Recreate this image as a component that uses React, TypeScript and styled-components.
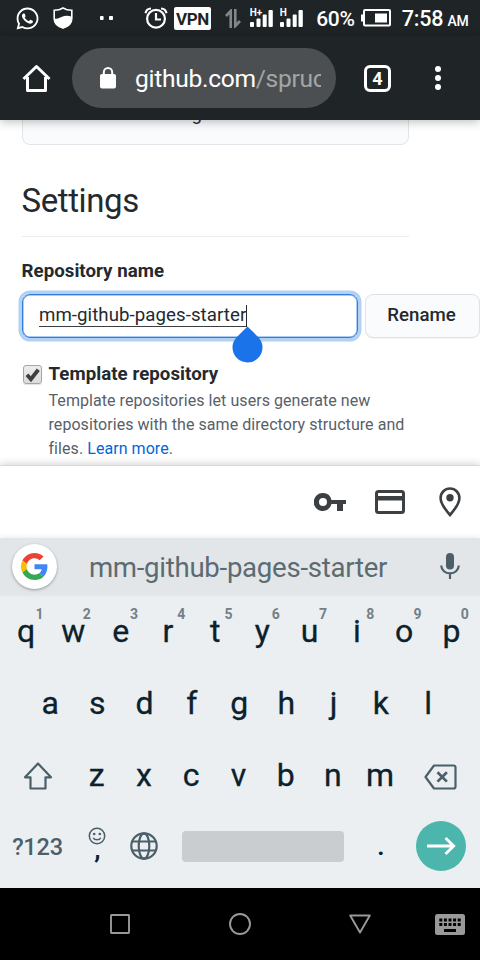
import React from "react";
import styled, { createGlobalStyle } from "styled-components";
import { FaWhatsapp } from "react-icons/fa";

const GlobalStyle = createGlobalStyle`
  * { box-sizing: border-box; }
  body { margin: 0; background: #fff; font-family: Roboto, "Liberation Sans", sans-serif; }
  svg { display: block; flex: none; }
`;

const Screen = styled.div`
  width: 480px;
  height: 960px;
  overflow: hidden;
  display: flex;
  flex-direction: column;
  background: #fff;
`;

/* ---------- status bar ---------- */

const StatusBar = styled.header`
  height: 36px;
  flex: none;
  display: flex;
  align-items: center;
  background: #1f2427;
  color: #fff;
`;

const StatusItem = styled.div<{ $gap: number; $width: number }>`
  flex: none;
  display: flex;
  justify-content: center;
  margin-left: ${(p) => p.$gap}px;
  width: ${(p) => p.$width}px;
`;

const VpnBadge = styled.div`
  width: 37px;
  height: 23px;
  margin-top: 1px;
  border-radius: 2px;
  background: #fff;
  color: #1f2427;
  font-size: 17px;
  font-weight: 700;
  letter-spacing: -0.4px;
  line-height: 25px;
  text-align: center;
`;

const StatusText = styled.span<{ $size: number; $top?: number }>`
  font-size: ${(p) => p.$size}px;
  font-weight: 500;
  line-height: 24px;
  letter-spacing: -0.2px;
  margin-top: ${(p) => p.$top ?? 2}px;
  white-space: nowrap;
`;

/* ---------- browser toolbar ---------- */

const Toolbar = styled.div`
  position: relative;
  z-index: 1;
  height: 84px;
  flex: none;
  display: flex;
  align-items: center;
  padding-left: 22px;
  background: #1f2427;
  box-shadow: 0 1px 10px rgba(0, 0, 0, 0.3);
`;

const AddressPill = styled.div`
  width: 264px;
  height: 60px;
  margin-left: 21px;
  padding: 0 15px 0 28px;
  border-radius: 30px;
  display: flex;
  align-items: center;
  gap: 19px;
  background: #4c4f52;
`;

const Url = styled.div`
  flex: 1;
  min-width: 0;
  overflow: hidden;
  white-space: nowrap;
  font-size: 24.6px;
  letter-spacing: -0.3px;
  line-height: 34px;
  padding-top: 1px;
  color: #fff;
`;

const UrlPath = styled.span`
  color: #a3a5a7;
`;

const TabCount = styled.div`
  width: 27px;
  height: 27px;
  margin-left: 28px;
  border: 3px solid #fff;
  border-radius: 6px;
  color: #fff;
  font-size: 18px;
  font-weight: 700;
  line-height: 22px;
  text-align: center;
`;

const Overflow = styled.div`
  width: 6px;
  margin-left: 44px;
  display: grid;
  gap: 3px;
`;

const OverflowDot = styled.i`
  width: 6px;
  height: 6px;
  border-radius: 50%;
  background: #fff;
`;

/* ---------- page ---------- */

const Page = styled.main`
  height: 345px;
  flex: none;
  overflow: hidden;
  padding-left: 21.5px;
  color: #24292e;
`;

const NoticeCard = styled.div`
  display: flex;
  align-items: flex-end;
  width: 387px;
  height: 64px;
  margin-top: -39.5px;
  padding: 0 0 18px 169px;
  border: 1px solid #e1e4e8;
  border-radius: 8px;
  background: #fafbfc;
  font-size: 18.67px;
  line-height: 24px;
`;

const Title = styled.h2`
  width: 387px;
  height: 92.5px;
  margin: 0;
  padding-top: 34.5px;
  border-bottom: 1px solid #eaecef;
  font-size: 33px;
  font-weight: 400;
  letter-spacing: -0.4px;
  line-height: 43px;
`;

const FieldLabel = styled.label`
  display: block;
  margin-top: 20px;
  font-size: 18.67px;
  font-weight: 700;
  letter-spacing: 0.05px;
  line-height: 28px;
`;

const RenameRow = styled.div`
  display: flex;
  gap: 7px;
  margin-top: 9px;
`;

const NameField = styled.div`
  position: relative;
  width: 336.5px;
  height: 44px;
  flex: none;
  display: flex;
  align-items: flex-start;
  padding: 6px 0 0 16.5px;
  border: 1px solid #2f7fe0;
  border-radius: 8px;
  box-shadow: 0 0 0 3.5px #b3d1f3, inset 0 0 0 0.5px #5b9ae6;
`;

const NameValue = styled.span`
  height: 26px;
  border-bottom: 1px solid #3a3f44;
  font-size: 18.67px;
  letter-spacing: 0.06px;
  line-height: 28px;
`;

const Caret = styled.i`
  width: 1px;
  height: 22px;
  margin-top: 4px;
  background: #24292e;
`;

const CaretHandle = styled.svg`
  position: absolute;
  left: 209px;
  top: 31px;
`;

const RenameButton = styled.button`
  width: 115px;
  height: 44px;
  flex: none;
  padding: 0 2px 3px 0;
  border: 1px solid #dfe1e4;
  border-radius: 8px;
  background: #fafbfc;
  box-shadow: 0 1px 0 rgba(27, 31, 35, 0.04);
  color: #24292e;
  font: 500 18.67px Roboto, sans-serif;
`;

const TemplateOption = styled.div`
  display: grid;
  grid-template-columns: 20px 370px;
  column-gap: 7px;
  margin-top: 22px;
  line-height: 28px;
`;

const Checkbox = styled.span`
  width: 19px;
  height: 19px;
  margin: 5px 0 0 1px;
  border: 1px solid #a6a6a6;
  border-radius: 3px;
  background: linear-gradient(#ededed, #dcdcdc);
  box-shadow: 0 1px 1px rgba(0, 0, 0, 0.12);
`;

const OptionTitle = styled.strong`
  font-size: 18.67px;
  font-weight: 700;
  letter-spacing: 0.06px;
`;

const OptionNote = styled.p`
  grid-column: 2;
  margin: 1px 0 0;
  color: #586069;
  font-size: 16px;
  letter-spacing: 0.06px;
  line-height: 24px;
`;

const NoteLink = styled.a`
  color: #0366d6;
`;

/* ---------- autofill and suggestion strips ---------- */

const AutofillBar = styled.div`
  position: relative;
  z-index: 1;
  height: 73px;
  flex: none;
  display: flex;
  align-items: center;
  padding-left: 314px;
  background: #fff;
  border-top: 1px solid #dadada;
  box-shadow: 0 -1px 8px rgba(0, 0, 0, 0.18);
`;

const AutofillIcon = styled.div<{ $gap?: number }>`
  margin-left: ${(p) => p.$gap ?? 0}px;
`;

const SuggestionBar = styled.div`
  position: relative;
  z-index: 2;
  height: 57px;
  flex: none;
  display: flex;
  align-items: center;
  padding-left: 12px;
  background: #e2e6e9;
  box-shadow: 0 -1px 5px rgba(0, 0, 0, 0.08);
`;

const GoogleButton = styled.div`
  width: 45px;
  height: 45px;
  flex: none;
  display: grid;
  place-items: center;
  border-radius: 50%;
  background: #fff;
  box-shadow: 0 1px 3px rgba(0, 0, 0, 0.35);
`;

const Suggestion = styled.div`
  width: 362px;
  text-align: center;
  padding-top: 2px;
  color: #5c6b72;
  font-size: 27.6px;
  letter-spacing: -0.28px;
  line-height: 32px;
`;

/* ---------- keyboard ---------- */

const Keyboard = styled.section`
  height: 293px;
  flex: none;
  background: #ebeff2;
  color: #0b222c;
`;

const KeyRow = styled.div<{ $inset: number }>`
  height: 72px;
  display: flex;
  padding-left: ${(p) => p.$inset}px;
`;

const Key = styled.div`
  position: relative;
  width: 47.25px;
  flex: none;
  text-align: center;
  font-size: 32px;
  line-height: 73px;
  -webkit-text-stroke: 0.3px currentColor;
`;

const KeyHint = styled.sup`
  position: absolute;
  left: 50%;
  top: 11px;
  width: 27px;
  color: #748086;
  font-size: 14px;
  font-weight: 700;
  line-height: 16px;
  -webkit-text-stroke: 0;
`;

const IconKey = styled.div<{ $width: number; $drop?: number }>`
  width: ${(p) => p.$width}px;
  flex: none;
  display: grid;
  place-items: center;
  padding-top: ${(p) => p.$drop ?? 0}px;
`;

const SymbolsKey = styled.div`
  width: 73px;
  padding-left: 2px;
  flex: none;
  text-align: center;
  color: #4b5f69;
  font-size: 23.5px;
  font-weight: 500;
  letter-spacing: -0.2px;
  line-height: 73px;
`;

const CommaKey = styled.div`
  width: 47px;
  display: flex;
  flex-direction: column;
  align-items: center;
  padding-top: 16px;
`;

const Comma = styled.span`
  margin-top: -6px;
  padding-left: 2px;
  font-size: 28px;
  font-weight: 500;
  line-height: 20px;
`;

const SpaceBar = styled.div`
  width: 162px;
  height: 31px;
  margin: 20px 0 0 14px;
  border-radius: 4px;
  background: #c9cdd0;
`;

const PeriodKey = styled.div`
  width: 72px;
  text-align: center;
  font-size: 28px;
  font-weight: 500;
  line-height: 70px;
  padding-left: 2px;
`;

const EnterKey = styled.div`
  width: 50px;
  height: 50px;
  margin-top: 10px;
  border-radius: 50%;
  display: grid;
  place-items: center;
  background: #4db6ac;
`;

/* ---------- navigation ---------- */

const NavBar = styled.nav`
  height: 72px;
  flex: none;
  display: grid;
  grid-template-columns: 60px repeat(3, 120px) 60px;
  align-items: center;
  justify-items: center;
  background: #000;
`;

const NavSlot = styled.div<{ $column: number }>`
  grid-column: ${(p) => p.$column};
`;

const Signal = ({ label }: { label: string }) => (
  <svg width="24" height="20" viewBox="0 0 24 20" fill="#fff">
    <rect x="0" y="14" width="4" height="5" rx="1" />
    <rect x="6.5" y="10.5" width="4" height="8.500" rx="1" />
    <rect x="12.700" y="6.500" width="4" height="12.500" rx="1" />
    <rect x="18.500" y="2" width="4.300" height="17" rx="1" />
    <text x="-0.300" y="7.600" fontFamily="Roboto" fontSize="10" fontWeight="700">{label}</text>
  </svg>
);

const ShieldIcon = () => (
  <svg width="20" height="22" viewBox="0 0 20 22">
    <path d="M10 1C7.500 2.600 4 3.300 1.200 3.300v8.200C1.200 16 5 19.500 10 21c5-1.500 8.800-5 8.800-9.500V3.300C16 3.300 12.500 2.600 10 1z" fill="none" stroke="#fff" strokeWidth="1.600" />
    <path d="M1 11.800c2.800 0 5-.6 7.500-1.900 3.500-1.600 6.500-1.600 10.500-.2v1.800c0 5-4 8.500-9 10C5 20 1 16.500 1 11.800z" fill="#fff" />
  </svg>
);

const AlarmIcon = () => (
  <svg width="24" height="22" viewBox="0 0 24 22" fill="none" stroke="#fff" strokeWidth="2.200">
    <circle cx="12" cy="11.800" r="8.900" />
    <path d="M12 6v6.500h5" />
    <path d="M1.500 6.200C2 3.500 4 1.600 7 1.500M22.500 6.200C22 3.500 20 1.600 17 1.500" />
  </svg>
);

const letters1 = "qwertyuiop".split("");
const letters2 = "asdfghjkl".split("");
const letters3 = "zxcvbnm".split("");

export default function App() {
  return (
    <Screen>
      <GlobalStyle />
      <StatusBar>
        <StatusItem $gap={16} $width={22}><FaWhatsapp size={25} /></StatusItem>
        <StatusItem $gap={15} $width={20}><ShieldIcon /></StatusItem>
        <StatusItem $gap={27} $width={13}>
          <svg width="13" height="4" viewBox="0 0 13 4" fill="#fff">
            <rect width="3.600" height="4" rx=".8" /><rect x="9" width="4" height="4" rx=".8" />
          </svg>
        </StatusItem>
        <StatusItem $gap={31} $width={24}><AlarmIcon /></StatusItem>
        <StatusItem $gap={6} $width={37}><VpnBadge>VPN</VpnBadge></StatusItem>
        <StatusItem $gap={14} $width={16}>
          <svg width="16" height="19" viewBox="0 0 16 19" fill="none" stroke="#84878a" strokeWidth="2.600">
            <path d="M5.700 19V2L1 7M10.300 0v17l4.700-5" />
          </svg>
        </StatusItem>
        <StatusItem $gap={9} $width={24}><Signal label="H+" /></StatusItem>
        <StatusItem $gap={6} $width={24}><Signal label="H" /></StatusItem>
        <StatusItem $gap={11.5} $width={40}><StatusText $size={21}>60%</StatusText></StatusItem>
        <StatusItem $gap={5.5} $width={30}>
          <svg width="30" height="18" viewBox="0 0 30 18">
            <rect x="3" y="1" width="26" height="15.500" rx="1" fill="none" stroke="#fff" strokeWidth="2" />
            <path d="M0 5.500h3v7H0zM14 4.500h12v9H14z" fill="#fff" />
          </svg>
        </StatusItem>
        <StatusItem $gap={11} $width={41}><StatusText $size={21.5}>7:58</StatusText></StatusItem>
        <StatusItem $gap={4} $width={22}><StatusText $size={14} $top={6}>AM</StatusText></StatusItem>
      </StatusBar>

      <Toolbar>
        <svg width="29" height="28" viewBox="0 0 29 28" fill="none" stroke="#fff" strokeWidth="3" strokeLinejoin="round">
          <path d="M1.500 15L14.500 2.500 27.500 15" />
          <path d="M5.500 13v13.500h18V13" />
        </svg>
        <AddressPill>
          <svg width="16" height="22" viewBox="0 0 16 22">
            <rect y="7" width="16" height="14.500" rx="2" fill="#fff" />
            <path d="M3.800 8V5.200a4.200 4.200 0 0 1 8.400 0V8" fill="none" stroke="#fff" strokeWidth="2" />
          </svg>
          <Url>github.com<UrlPath>/spruc</UrlPath></Url>
        </AddressPill>
        <TabCount>4</TabCount>
        <Overflow><OverflowDot /><OverflowDot /><OverflowDot /></Overflow>
      </Toolbar>

      <Page>
        <NoticeCard>g</NoticeCard>
        <Title>Settings</Title>
        <FieldLabel>Repository name</FieldLabel>
        <RenameRow>
          <NameField>
            <NameValue>mm-github-pages-starter</NameValue>
            <Caret />
            <CaretHandle width="31" height="37" viewBox="0 0 31 37">
              <path d="M15.500 0.500L26.100 10.900A15 15 0 1 1 4.900 10.900Z" fill="#1a73e8" />
            </CaretHandle>
          </NameField>
          <RenameButton>Rename</RenameButton>
        </RenameRow>
        <TemplateOption>
          <Checkbox>
            <svg width="17" height="17" viewBox="0 0 17 17">
              <path d="M3 8.800l3.900 4.400L14.300 3.800" fill="none" stroke="#404040" strokeWidth="3.800" />
            </svg>
          </Checkbox>
          <OptionTitle>Template repository</OptionTitle>
          <OptionNote>
            Template repositories let users generate new<br />
            repositories with the same directory structure and<br />
            files. <NoteLink>Learn more</NoteLink>.
          </OptionNote>
        </TemplateOption>
      </Page>

      <AutofillBar>
        <AutofillIcon>
          <svg width="32" height="18" viewBox="0 0 32 18" fill="#3c4043">
            <path fillRule="evenodd" d="M9 0a9 9 0 0 1 8.500 7H32v4h-3v7h-6v-7h-5.500A9 9 0 1 1 9 0zM9 5a4 4 0 1 0 0 8 4 4 0 0 0 0-8z" />
          </svg>
        </AutofillIcon>
        <AutofillIcon $gap={29}>
          <svg width="30" height="24" viewBox="0 0 30 24">
            <rect x="1.500" y="1.500" width="27" height="21" rx="2" fill="none" stroke="#3c4043" strokeWidth="3" />
            <path d="M1 6h28v4.500H1z" fill="#3c4043" />
          </svg>
        </AutofillIcon>
        <AutofillIcon $gap={34}>
          <svg width="22" height="30" viewBox="0 0 22 30">
            <path d="M11 1.500a9.400 9.400 0 0 0-9.400 9.400C1.600 18 11 28 11 28s9.400-10 9.400-17.100A9.400 9.400 0 0 0 11 1.500z" fill="none" stroke="#3c4043" strokeWidth="2.600" />
            <circle cx="11" cy="10.800" r="3.700" fill="#3c4043" />
          </svg>
        </AutofillIcon>
      </AutofillBar>

      <SuggestionBar>
        <GoogleButton>
          <svg width="27" height="27" viewBox="0 0 48 48">
            <path fill="#ea4335" d="M24 9.500c3.540 0 6.710 1.220 9.210 3.600l6.850-6.850C35.900 2.380 30.470 0 24 0 14.620 0 6.510 5.380 2.560 13.220l7.980 6.190C12.430 13.720 17.740 9.500 24 9.500z" />
            <path fill="#4285f4" d="M46.980 24.550c0-1.570-.15-3.090-.38-4.550H24v9.020h12.940c-.58 2.960-2.260 5.480-4.780 7.180l7.730 6c4.510-4.180 7.090-10.360 7.090-17.650z" />
            <path fill="#fbbc05" d="M10.530 28.590c-.48-1.450-.76-2.990-.76-4.590s.27-3.140.76-4.590l-7.980-6.190C.92 16.460 0 20.120 0 24c0 3.880.92 7.540 2.560 10.780l7.970-6.190z" />
            <path fill="#34a853" d="M24 48c6.480 0 11.930-2.130 15.890-5.810l-7.730-6c-2.150 1.450-4.920 2.300-8.160 2.300-6.260 0-11.570-4.220-13.470-9.910l-7.980 6.190C6.510 42.620 14.620 48 24 48z" />
          </svg>
        </GoogleButton>
        <Suggestion>mm-github-pages-starter</Suggestion>
        <StatusItem $gap={21} $width={20}>
          <svg width="20" height="27" viewBox="0 0 20 27">
            <rect x="6" y="0" width="8" height="16.500" rx="4" fill="#4b5f69" />
            <path d="M1.200 12.500c.3 4.800 4 7.900 8.800 7.900s8.500-3.100 8.800-7.900M10 20.500V26" fill="none" stroke="#4b5f69" strokeWidth="2.200" />
          </svg>
        </StatusItem>
      </SuggestionBar>

      <Keyboard>
        <KeyRow $inset={2.5}>
          {letters1.map((c, i) => (
            <Key key={c}>{c}<KeyHint>{(i + 1) % 10}</KeyHint></Key>
          ))}
        </KeyRow>
        <KeyRow $inset={26.5}>{letters2.map((c) => <Key key={c}>{c}</Key>)}</KeyRow>
        <KeyRow $inset={3}>
          <IconKey $width={70} $drop={1}>
            <svg width="30" height="28" viewBox="0 0 30 28" fill="none" stroke="#4b5f69" strokeWidth="2.200" strokeLinejoin="round">
              <path d="M15 1.500L28 15.300H22.500V26.500H7.500V15.300H2z" />
            </svg>
          </IconKey>
          {letters3.map((c) => <Key key={c}>{c}</Key>)}
          <IconKey $width={73} $drop={3}>
            <svg width="33" height="26" viewBox="0 0 33 26" fill="none" stroke="#4b5f69" strokeWidth="2.200" strokeLinejoin="round">
              <path d="M10 1.500H29.500Q31.500 1.500 31.500 3.500V22.500Q31.500 24.500 29.500 24.500H10L1.500 13z" />
              <path d="M13.500 8.200l9.400 9.400M22.900 8.200l-9.400 9.400" strokeWidth="2.700" />
            </svg>
          </IconKey>
        </KeyRow>
        <KeyRow $inset={0}>
          <SymbolsKey>?123</SymbolsKey>
          <CommaKey>
            <svg width="18" height="18" viewBox="0 0 18 18" fill="none" stroke="#4b5f69" strokeWidth="1.500">
              <circle cx="9" cy="9" r="7.700" />
              <circle cx="6.200" cy="7" r=".6" /><circle cx="11.800" cy="7" r=".6" />
              <path d="M5.200 10.800c1.500 2.700 6.100 2.700 7.600 0" />
            </svg>
            <Comma>,</Comma>
          </CommaKey>
          <IconKey $width={48}>
            <svg width="28" height="30" viewBox="0 0 28 30" fill="none" stroke="#4b5f69" strokeWidth="2.200">
              <circle cx="14" cy="14" r="12.700" />
              <ellipse cx="14" cy="14" rx="5.300" ry="12.700" />
              <path d="M2.600 9.500h22.800M2.600 18.500h22.800" />
            </svg>
          </IconKey>
          <SpaceBar />
          <PeriodKey>.</PeriodKey>
          <EnterKey>
            <svg width="29" height="18" viewBox="0 0 29 18" fill="none" stroke="#fff" strokeWidth="2.800">
              <path d="M0 9h27M18.500 1l8.200 8-8.200 8" />
            </svg>
          </EnterKey>
        </KeyRow>
      </Keyboard>

      <NavBar>
        <NavSlot $column={2}>
          <svg width="20" height="20" viewBox="0 0 20 20" fill="none" stroke="#999" strokeWidth="1.900">
            <rect x="1" y="1" width="18" height="18" rx=".5" />
          </svg>
        </NavSlot>
        <NavSlot $column={3}>
          <svg width="22" height="22" viewBox="0 0 22 22" fill="none" stroke="#999" strokeWidth="1.900">
            <circle cx="11" cy="11" r="10" />
          </svg>
        </NavSlot>
        <NavSlot $column={4}>
          <svg width="22" height="20" viewBox="0 0 22 20" fill="none" stroke="#999" strokeWidth="1.900" strokeLinejoin="round">
            <path d="M1.200 1.500h19.600L11 18.500z" />
          </svg>
        </NavSlot>
        <NavSlot $column={5}>
          <svg width="30" height="21" viewBox="0 0 30 21">
            <rect width="30" height="21" rx="2.500" fill="#999" />
            <g fill="#000">
              {[4.3, 8.9, 13.5, 18.1, 22.7].map((x) => (
                <React.Fragment key={x}>
                  <rect x={x} y="4.500" width="3" height="3" />
                  <rect x={x} y="9" width="3" height="3" />
                </React.Fragment>
              ))}
              <rect x="9" y="15" width="12" height="3" />
            </g>
          </svg>
        </NavSlot>
      </NavBar>
    </Screen>
  );
}
